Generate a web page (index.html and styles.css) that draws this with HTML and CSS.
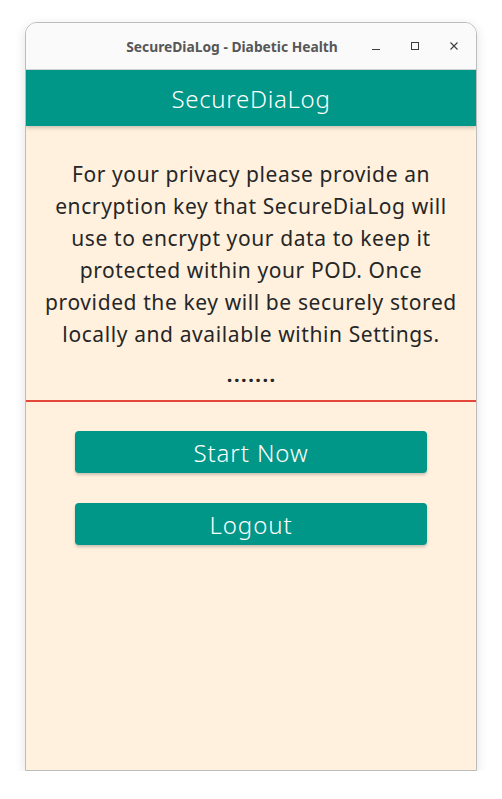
FILE: index.html
```html
<!DOCTYPE html>
<html>
<head>
<meta charset="utf-8">
<link rel="stylesheet" href="styles.css">
</head>
<body>
<div class="window">
  <div class="titlebar">
    <div class="title">SecureDiaLog - Diabetic Health</div>
    <div class="controls">
      <span class="ctl"><svg width="12" height="12" viewBox="0 0 12 12"><path d="M2 9.5h8" stroke="#3d3d3d" stroke-width="1"/></svg></span>
      <span class="ctl"><svg width="12" height="12" viewBox="0 0 12 12"><rect x="2.5" y="2.5" width="7" height="7" fill="none" stroke="#3d3d3d" stroke-width="1"/></svg></span>
      <span class="ctl"><svg width="12" height="12" viewBox="0 0 12 12"><path d="M2.5 2.5l7 7M9.5 2.5l-7 7" stroke="#3d3d3d" stroke-width="1.1"/></svg></span>
    </div>
  </div>
  <div class="appbar">SecureDiaLog</div>
  <div class="content">
    <p class="message">For your privacy please provide an<br>encryption key that SecureDiaLog will<br>use to encrypt your data to keep it<br>protected within your POD. Once<br>provided the key will be securely stored<br>locally and available within Settings.</p>
    <div class="dots">.......</div>
    <div class="divider"></div>
    <div class="actions">
      <button class="btn">Start Now</button>
      <button class="btn">Logout</button>
    </div>
  </div>
</div>
</body>
</html>
```
FILE: styles.css
```css
html, body {
  margin: 0;
  padding: 0;
  background: #ffffff;
}
body {
  padding-top: 22px;
  padding-left: 25px;
}
.window {
  width: 450px;
  height: 747px;
  border: 1px solid #bcbcbc;
  border-radius: 12px 12px 0 0;
  box-shadow: 0 3px 12px rgba(0,0,0,0.12);
  background: #fff1de;
  display: flex;
  flex-direction: column;
  overflow: hidden;
}
.titlebar {
  height: 46px;
  flex: none;
  background: #fafafa;
  border-bottom: 1px solid #d6d6d6;
  display: flex;
  align-items: center;
  position: relative;
}
.title {
  position: absolute;
  left: 0;
  right: 0;
  text-align: center;
  padding-right: 38px;
  font-family: "Noto Sans", sans-serif;
  font-weight: bold;
  font-size: 13.8px;
  color: #575757;
}
.controls {
  margin-left: auto;
  margin-right: 10px;
  display: flex;
  gap: 15px;
  position: relative;
}
.ctl {
  width: 24px;
  height: 24px;
  display: flex;
  align-items: center;
  justify-content: center;
}
.appbar {
  height: 56px;
  flex: none;
  background: #009688;
  color: #ffffff;
  font-family: "Noto Sans", sans-serif;
  font-weight: 300;
  font-size: 24px;
  letter-spacing: 0.7px;
  display: flex;
  align-items: center;
  justify-content: center;
  box-shadow: 0 2px 4px rgba(0,0,0,0.2);
  position: relative;
}
.content {
  flex: 1;
  font-family: "Noto Sans", sans-serif;
  color: #262626;
}
.message {
  margin: 0;
  padding: 32px 0 0;
  text-align: center;
  font-size: 21px;
  letter-spacing: 0.6px;
  line-height: 32px;
  white-space: nowrap;
}
.dots {
  text-align: center;
  font-size: 20px;
  line-height: 32px;
  margin-top: 9px;
  font-weight: bold;
  letter-spacing: 1.5px;
  padding-left: 1.5px;
}
.divider {
  height: 2px;
  background: #e4473a;
  margin-top: 9px;
}
.actions {
  display: flex;
  flex-direction: column;
  align-items: center;
  gap: 30px;
  padding-top: 29px;
}
.btn {
  width: 352px;
  height: 42px;
  border: none;
  border-radius: 4px;
  background: #009688;
  color: #ffffff;
  font-family: "Noto Sans", sans-serif;
  font-weight: 300;
  font-size: 24px;
  letter-spacing: 0.9px;
  box-shadow: 0 2px 3px rgba(0,0,0,0.2);
  padding: 0;
}
```
